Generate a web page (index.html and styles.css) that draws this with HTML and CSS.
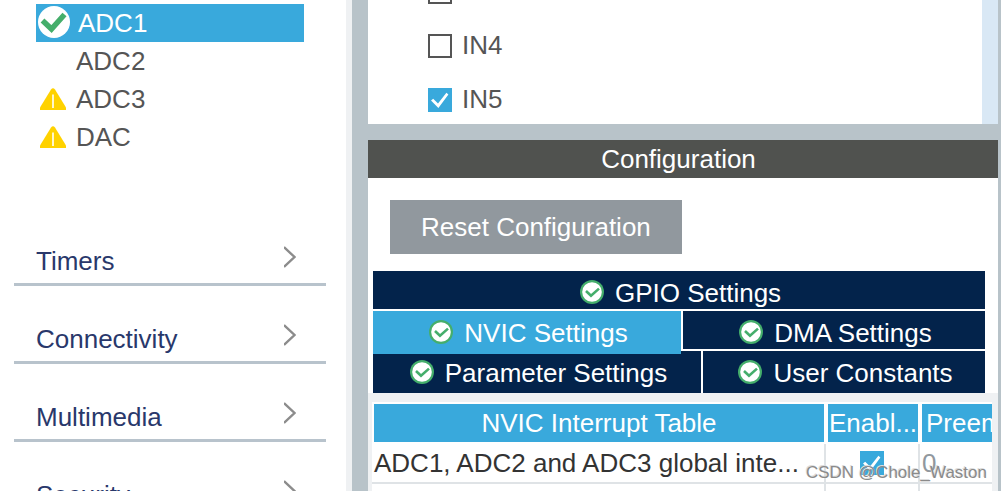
FILE: index.html
```html
<!DOCTYPE html>
<html lang="en">
<head>
<meta charset="utf-8">
<title>Pinout &amp; Configuration</title>
<link rel="stylesheet" href="styles.css">
</head>
<body>
<svg class="defs" aria-hidden="true">
  <symbol id="ok" viewBox="0 0 24 24">
    <circle cx="12" cy="12" r="12" fill="#45ae6b"/>
    <circle cx="12" cy="12" r="9.8" fill="#fff"/>
    <path d="M6 11l5 4.800 8-7.200" fill="none" stroke="#45ae6b" stroke-width="2.600"/>
  </symbol>
  <symbol id="warn" viewBox="0 0 26 22">
    <path d="M11 1.500Q13-1 15 1.500L26 19.500V22H0V19.500z" fill="#ffd200"/>
    <path d="M13 6.500v13.500" stroke="#fff" stroke-width="1.600"/>
  </symbol>
  <symbol id="chevron" viewBox="0 0 12 22">
    <path d="M0 1l10.500 10L0 21" fill="none" stroke="#8c8c8c" stroke-width="2.400"/>
  </symbol>
</svg>
<div class="app">
  <nav class="sidebar">
    <ul class="peripherals">
      <li><a class="peripheral selected" href="#adc1"><svg class="state-big" viewBox="0 0 32 32"><circle cx="16" cy="16" r="16" fill="#fff"/><path d="M4.500 14.500l9 8.500L26.500 8.500" fill="none" stroke="#45ae6b" stroke-width="5.500"/></svg>ADC1</a></li>
      <li><a class="peripheral" href="#adc2"><span class="state"></span>ADC2</a></li>
      <li><a class="peripheral" href="#adc3"><svg class="state"><use href="#warn"/></svg>ADC3</a></li>
      <li><a class="peripheral" href="#dac"><svg class="state"><use href="#warn"/></svg>DAC</a></li>
    </ul>
    <div class="categories">
      <button class="category" type="button">Timers<svg class="chevron"><use href="#chevron"/></svg></button>
      <button class="category" type="button">Connectivity<svg class="chevron"><use href="#chevron"/></svg></button>
      <button class="category" type="button">Multimedia<svg class="chevron"><use href="#chevron"/></svg></button>
      <button class="category" type="button">Security<svg class="chevron"><use href="#chevron"/></svg></button>
    </div>
  </nav>
  <main class="main">
    <section class="mode">
      <div class="channels">
        <label class="channel"><input class="check" type="checkbox" aria-label="Channel"></label>
        <label class="channel"><input class="check" type="checkbox">IN4</label>
        <label class="channel"><input class="check" type="checkbox" checked>IN5</label>
      </div>
      <div class="scroll-thumb"></div>
    </section>
    <section class="config">
      <h2 class="title">Configuration</h2>
      <button class="reset" type="button">Reset Configuration</button>
      <div class="tabs" role="tablist">
        <div class="tab-row">
          <button class="tab" role="tab" type="button"><svg class="ok"><use href="#ok"/></svg>GPIO Settings</button>
        </div>
        <div class="tab-row split-mid">
          <button class="tab active" role="tab" type="button" aria-selected="true"><svg class="ok"><use href="#ok"/></svg>NVIC Settings</button>
          <button class="tab" role="tab" type="button"><svg class="ok"><use href="#ok"/></svg>DMA Settings</button>
        </div>
        <div class="tab-row split-low">
          <button class="tab" role="tab" type="button"><svg class="ok"><use href="#ok"/></svg>Parameter Settings</button>
          <button class="tab" role="tab" type="button"><svg class="ok"><use href="#ok"/></svg>User Constants</button>
        </div>
      </div>
      <div class="panel">
        <table class="nvic">
          <thead>
            <tr><th class="name">NVIC Interrupt Table</th><th class="enabled">Enabl...</th><th class="priority">Preemption Priority</th></tr>
          </thead>
          <tbody>
            <tr><td>ADC1, ADC2 and ADC3 global inte...</td><td class="center"><input class="check" type="checkbox" checked aria-label="Enabled"></td><td class="muted">0</td></tr>
            <tr><td></td><td></td><td></td></tr>
          </tbody>
        </table>
      </div>
    </section>
  </main>
  <div class="watermark">CSDN @Chole_Waston</div>
</div>
</body>
</html>
```
FILE: styles.css
```css
* { box-sizing: border-box; }

body {
  margin: 0;
  background: #fff;
  color: #555;
  font: 26px/34px "Liberation Sans", Arial, sans-serif;
}

button {
  margin: 0;
  border: 0;
  border-radius: 0;
  font: inherit;
  cursor: pointer;
}

.defs { display: none; }

.app {
  position: relative;
  display: flex;
  height: 100vh;
  overflow: hidden;
  background: #b8c3c9;
}

/* Sidebar */
.sidebar {
  flex: 0 0 352px;
  padding: 4px 20px 0 14px;
  background: #fff;
  border-right: 6px solid #eff1f3;
}

.peripherals {
  margin: 0 22px 52px;
  padding: 0;
  list-style: none;
}

.peripheral {
  display: flex;
  align-items: center;
  gap: 10px;
  height: 38px;
  padding-left: 4px;
  color: #555;
  text-decoration: none;
}

.peripheral.selected {
  gap: 8px;
  padding-left: 2px;
  background: #39a9dc;
  color: #fff;
}

.state { width: 26px; height: 22px; }

.state-big {
  width: 32px;
  height: 32px;
  margin-bottom: 2px;
}

.category {
  display: flex;
  align-items: center;
  justify-content: space-between;
  width: 100%;
  height: 78px;
  padding: 30px 30px 0 22px;
  background: none;
  border-bottom: 3px solid #b8c3cc;
  color: #29386b;
}

.chevron {
  width: 12px;
  height: 22px;
  margin-bottom: 8px;
}

/* Main column */
.main {
  flex: 1;
  min-width: 0;
  display: flex;
  flex-direction: column;
  gap: 16px;
  margin: 0 3px 0 16px;
}

.mode {
  display: flex;
  flex: 0 0 124px;
  overflow: hidden;
  background: #fff;
}

.channels {
  flex: 1;
  display: flex;
  flex-direction: column;
  justify-content: flex-end;
  gap: 20px;
  padding: 0 60px 8px;
}

.channel {
  display: flex;
  flex: none;
  align-items: center;
  gap: 10px;
  height: 34px;
}

.channel .check { margin-top: 2px; }

.check {
  appearance: none;
  flex: none;
  width: 24px;
  height: 24px;
  margin: 0;
  border: 2px solid #555;
  background: #fff;
}

.check:checked {
  border-color: #39a9dc;
  background: #39a9dc;
}

.check:checked::before {
  content: "";
  display: block;
  width: 20px;
  height: 20px;
  background: #fff;
  clip-path: polygon(5% 52%, 16% 44%, 40% 68%, 82% 14%, 92% 22%, 42% 90%);
}

.scroll-thumb {
  width: 16px;
  background: #d9e8f5;
}

.config {
  flex: 1;
  min-height: 0;
  display: flex;
  flex-direction: column;
  background: #fff;
}

.title {
  margin: 0;
  padding: 2px 9px 2px 0;
  background: #50524f;
  color: #fff;
  font-size: 26px;
  font-weight: 400;
  text-align: center;
}

.reset {
  align-self: flex-start;
  margin: 22px 22px 17px;
  padding: 10px 31px;
  background: #91989e;
  color: #fff;
}

/* Tabs */
.tabs {
  display: grid;
  gap: 2px;
  padding: 0 13px 0 5px;
}

.tab-row { display: grid; column-gap: 2px; }
.split-mid { grid-template-columns: 308fr 302fr; }
.split-low { grid-template-columns: 328fr 282fr; }

.tab {
  display: flex;
  align-items: center;
  justify-content: center;
  gap: 11px;
  height: 38px;
  padding: 5px 0 0 3px;
  background: #03234b;
  color: #fff;
}

.split-low .tab {
  height: 42px;
  padding-bottom: 3px;
}

.tab.active {
  position: relative;
  z-index: 1;
  height: 43px;
  margin-bottom: -5px;
  padding-bottom: 5px;
  background: #39a9dc;
}

.ok {
  width: 24px;
  height: 24px;
  margin-bottom: 2px;
}

/* Interrupt table */
.panel {
  flex: 1;
  min-height: 0;
  overflow: hidden;
  padding: 9px 6px 0 4px;
  background: #eff1f3;
}

.nvic {
  width: 100%;
  table-layout: fixed;
  border-collapse: separate;
  border-spacing: 0;
  background: #fff;
}

.nvic th,
.nvic td {
  overflow: hidden;
  white-space: nowrap;
}

.nvic th {
  height: 42px;
  padding: 0;
  border: 2px solid #fff;
  background: #39a9dc;
  color: #fff;
  font-weight: 400;
}

.nvic .enabled { width: 94px; }

.nvic .priority {
  width: 72px;
  padding-left: 4px;
  border-right: 0;
  text-align: left;
}

.nvic td {
  height: 40px;
  padding: 0 0 0 2px;
  border: solid #dfe3e6;
  border-width: 0 2px 2px 0;
  color: #333;
}

.nvic td:last-child { border-right: 0; }
.nvic .center { padding: 0; line-height: 0; text-align: center; }
.nvic .muted { color: #91989e; }

.watermark {
  position: absolute;
  right: 14px;
  bottom: 6px;
  color: #8a8a8a;
  font-size: 17px;
  line-height: 24px;
  text-shadow: -1px -1px 0 #ddd;
}
```
